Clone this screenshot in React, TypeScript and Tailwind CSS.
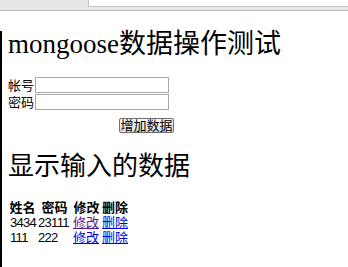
const cjkSans = '[font-family:"Liberation_Sans","Noto_Sans_CJK_SC",sans-serif]'

const rows = [
  { name: '3434', pwd: '23111', visited: true },
  { name: '111', pwd: '222', visited: false },
]

export default function App() {
  return (
    <div className="w-[348px] h-[267px] bg-white overflow-hidden">
      {/* browser toolbar strip */}
      <div className="flex h-[11px] bg-[#e6e6e6] border-b border-[#b9b9b9]">
        <div className="w-[88px]" />
        <div className="flex-1 h-[7px] bg-white border-l border-b border-[#c4c4c4]" />
      </div>

      <div className="border-l-2 border-black h-[256px] pl-[6px] text-black">
        <h1 className='mt-[20px] text-[27px] leading-[27px] [font-family:"Liberation_Serif","Noto_Sans_CJK_SC",serif] whitespace-nowrap'>
          mongoose数据操作测试
        </h1>

        {/* form */}
        <div className={`mt-[19px] text-[13px] ${cjkSans}`}>
          <div className="flex items-center h-[16px] gap-[1px]">
            <span className="w-[26px] leading-[13px]">帐号</span>
            <div className="w-[134px] h-[16px] border border-[#a8a8a8] bg-white" />
          </div>
          <div className="flex items-center h-[16px] mt-[1px] gap-[1px]">
            <span className="w-[26px] leading-[13px]">密码</span>
            <div className="w-[134px] h-[16px] border border-[#a8a8a8] bg-white" />
          </div>
          <div className="flex mt-[8px] pl-[111px]">
            <button className="w-[55px] h-[15px] border border-[#707070] rounded-[2px] bg-gradient-to-b from-[#f6f6f6] to-[#dcdcdc] text-[13px] leading-[13px] flex items-center justify-center">
              增加数据
            </button>
          </div>
        </div>

        <h2 className='mt-[21px] text-[26px] leading-[26px] [font-family:"Liberation_Serif","Noto_Sans_CJK_SC",serif] whitespace-nowrap'>
          显示输入的数据
        </h2>

        {/* data table */}
        <div className={`mt-[20px] text-[13px] leading-[15px] ${cjkSans}`}>
          <div className="grid grid-cols-[29px_35px_29px_28px] h-[15px] font-bold">
            <span className="text-center">姓名</span>
            <span className="text-center">密码</span>
            <span className="text-center">修改</span>
            <span className="text-center">删除</span>
          </div>
          {rows.map((r) => (
            <div key={r.name} className="grid grid-cols-[29px_35px_29px_28px] h-[15px] items-center">
              <span className="pl-[2px] tracking-[-0.7px]">{r.name}</span>
              <span className="pl-[1px] tracking-[-0.7px]">{r.pwd}</span>
              <a href="#" className={`pl-[1px] underline ${r.visited ? 'text-[#551a8b]' : 'text-[#0000ee]'}`}>修改</a>
              <a href="#" className="pl-[1px] underline text-[#0000ee]">删除</a>
            </div>
          ))}
        </div>
      </div>
    </div>
  )
}
